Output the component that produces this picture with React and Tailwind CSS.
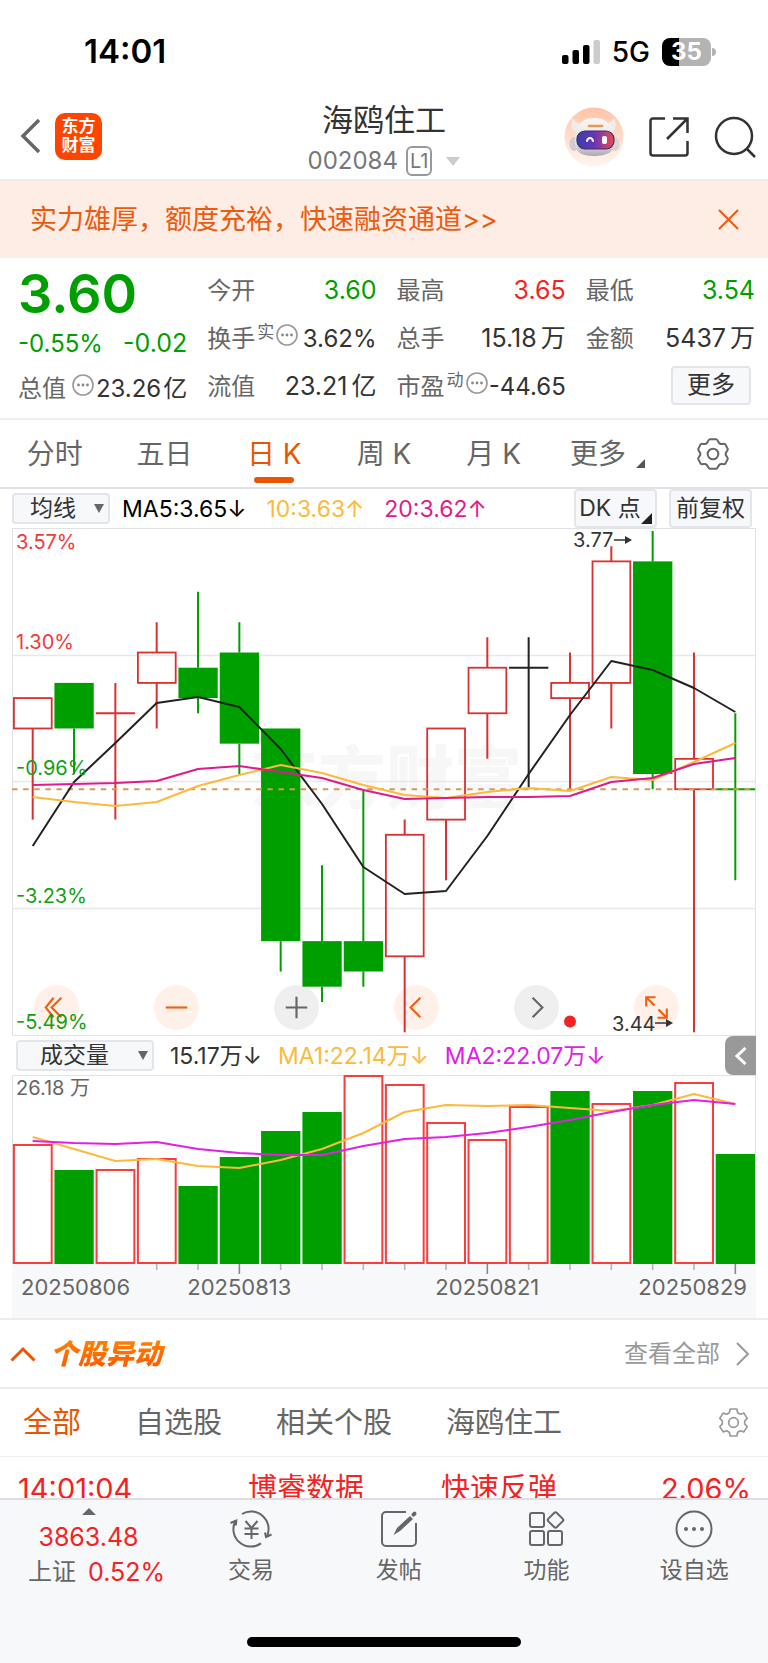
import { useState } from "react";

const GREEN = "#009f00";
const RED = "#d93030";

const quoteTabs = ["分时", "五日", "日 K", "周 K", "月 K"];
const filters = ["全部", "自选股", "相关个股", "海鸥住工"];

// o = open, c = close, h = high, l = low, v = volume bar height
const candles = [
  { o: 3.64, c: 3.66, h: 3.66, l: 3.58, v: 120 },
  { o: 3.67, c: 3.64, h: 3.67, l: 3.61, v: 94 },
  { o: 3.65, c: 3.65, h: 3.67, l: 3.58, v: 95, up: true },
  { o: 3.67, c: 3.69, h: 3.71, l: 3.64, v: 106 },
  { o: 3.68, c: 3.66, h: 3.73, l: 3.65, v: 78 },
  { o: 3.69, c: 3.63, h: 3.71, l: 3.61, v: 107 },
  { o: 3.64, c: 3.5, h: 3.64, l: 3.48, v: 133 },
  { o: 3.5, c: 3.47, h: 3.55, l: 3.46, v: 152 },
  { o: 3.5, c: 3.48, h: 3.6, l: 3.47, v: 189, volUp: true },
  { o: 3.49, c: 3.57, h: 3.58, l: 3.44, v: 180 },
  { o: 3.58, c: 3.64, h: 3.64, l: 3.54, v: 142 },
  { o: 3.65, c: 3.68, h: 3.7, l: 3.62, v: 125 },
  { o: 3.68, c: 3.68, h: 3.7, l: 3.6, v: 158, flat: true, volUp: true },
  { o: 3.66, c: 3.67, h: 3.69, l: 3.6, v: 173, volUp: false },
  { o: 3.67, c: 3.75, h: 3.76, l: 3.64, v: 161 },
  { o: 3.75, c: 3.61, h: 3.77, l: 3.6, v: 173 },
  { o: 3.6, c: 3.62, h: 3.69, l: 3.44, v: 182 },
  { o: 3.6, c: 3.6, h: 3.65, l: 3.54, v: 110 },
];

const ma5 = [318, 254, 215, 175, 169, 179, 221, 276, 339, 366, 363, 308, 246, 187, 133, 142, 160, 184];
const ma10 = [269, 274, 278, 274, 258, 247, 237, 245, 257, 267, 270, 264, 260, 263, 249, 252, 234, 215];
const ma20 = [257, 256, 255, 253, 241, 238, 244, 250, 262, 271, 270, 269, 269, 268, 254, 250, 236, 230];
const vol1 = [62, 74, 86, 84, 91, 93, 85, 74, 58, 37, 30, 31, 30, 33, 36, 30, 19, 29];
const vol2 = [66, 68, 69, 67, 74, 78, 80, 80, 71, 64, 62, 58, 52, 45, 37, 30, 25, 29];

const cx = (i) => 20.7 + i * 41.33;
const py = (price) => 3 + (3.77 - price) * 1519;
const line = (arr) => arr.map((y, i) => `${cx(i)},${y}`).join(" ");
const isUp = (d) => d.up || d.c > d.o;

const ArrowTip = ({ x, y }) => (
  <g>
    <path d={`M${x} ${y}h14`} stroke="#333" strokeWidth="1.5" />
    <path d={`M${x + 11} ${y - 4}l7 4-7 4z`} fill="#333" />
  </g>
);

const PriceChart = () => (
  <svg viewBox="0 0 744 508" className="block w-full h-auto" role="img" aria-label="日K线">
    <text x="374" y="275" textAnchor="middle" fill="#f7f7f7" className="text-[68px] font-black">东方财富</text>
    {[127, 253, 380].map((y) => (
      <path key={y} d={`M0 ${y + 0.5}H744`} stroke="#e6e8ee" strokeWidth="1.5" />
    ))}
    <rect x="0.5" y="0.5" width="743" height="507" fill="none" stroke="#e0e2e6" />

    {candles.map((d, i) => {
      const x = cx(i);
      const top = py(Math.max(d.o, d.c));
      const bottom = py(Math.min(d.o, d.c));
      const color = d.flat ? "#222" : isUp(d) ? RED : GREEN;
      return (
        <g key={i} stroke={color} strokeWidth="2">
          <path d={`M${x} ${py(d.h)}V${top}M${x} ${bottom}V${py(d.l)}`} />
          {d.o === d.c ? (
            <path d={`M${x - 19.6} ${top}h39.3`} />
          ) : isUp(d) ? (
            <rect x={x - 18.8} y={top} width="37.8" height={bottom - top} fill="none" strokeWidth="1.8" />
          ) : (
            <rect x={x - 19.6} y={top} width="39.3" height={bottom - top} fill={color} stroke="none" />
          )}
        </g>
      );
    })}

    <path d="M0 261.2H744" stroke="#d29a5b" strokeWidth="2" strokeDasharray="5.5 5.6" />
    <g fill="none" strokeWidth="2" strokeLinejoin="round">
      <polyline points={line(ma5)} stroke="#222" />
      <polyline points={line(ma10)} stroke="#fdb93a" />
      <polyline points={line(ma20)} stroke="#df1b8b" />
    </g>

    <g className="text-[20px]">
      <text x="4" y="21" fill="#f03a3a">3.57%</text>
      <text x="4" y="121" fill="#f03a3a">1.30%</text>
      <text x="4" y="247" fill="#12a012">-0.96%</text>
      <text x="4" y="375" fill="#12a012">-3.23%</text>
      <text x="4" y="501" fill="#12a012">-5.49%</text>
      <text x="561" y="19" fill="#333">3.77</text>
      <text x="600" y="503" fill="#333">3.44</text>
    </g>
    <ArrowTip x={602} y={12} />
    <ArrowTip x={643} y={495} />
    <circle cx="558" cy="493.5" r="6" fill="#f52222" />
  </svg>
);

const VolumeChart = () => (
  <svg viewBox="0 0 744 243" className="block w-full h-auto" role="img" aria-label="成交量">
    <rect x="0" y="189" width="744" height="54" fill="#f7f8fa" />
    <path d="M0.5 189V0.5H743.5V189" fill="none" stroke="#e0e2e6" />
    <text x="4" y="20" fill="#666" className="text-[20px]">26.18 万</text>
    {candles.map((d, i) => {
      const up = d.volUp ?? isUp(d);
      return up ? (
        <rect key={i} x={cx(i) - 18.8} y={190 - d.v} width="37.8" height={d.v - 2} fill="none" stroke="#f93c3c" strokeWidth="2" />
      ) : (
        <rect key={i} x={cx(i) - 19.6} y={189 - d.v} width="39.3" height={d.v} fill={GREEN} />
      );
    })}
    <g fill="none" strokeWidth="2" strokeLinejoin="round">
      <polyline points={line(vol1)} stroke="#fdb93a" />
      <polyline points={line(vol2)} stroke="#e020e6" />
    </g>
    {candles.map((d, i) =>
      i < 3 ? null : (
        <path key={i} d={`M${cx(i)} 189v${i % 6 === 5 ? 10 : 6}`} stroke={i % 6 === 5 ? "#888" : "#b5b5b5"} strokeWidth="1.6" />
      )
    )}
    <g fill="#666" className="text-[22px]">
      <text x="9" y="220">20250806</text>
      <text x={cx(5)} y="220" textAnchor="middle">20250813</text>
      <text x={cx(11)} y="220" textAnchor="middle">20250821</text>
      <text x="735" y="220" textAnchor="end">20250829</text>
    </g>
  </svg>
);

const MoreDots = () => (
  <svg width="22" height="22" viewBox="0 0 22 22" className="shrink-0">
    <circle cx="11" cy="11" r="10" fill="none" stroke="#999" strokeWidth="1.6" />
    <g fill="#888">
      <circle cx="6.5" cy="11" r="1.4" />
      <circle cx="11" cy="11" r="1.4" />
      <circle cx="15.5" cy="11" r="1.4" />
    </g>
  </svg>
);

const Robot = () => (
  <svg width="60" height="60" viewBox="0 0 60 60">
    <defs>
      <linearGradient id="halo" x1="0" y1="0" x2="0" y2="1">
        <stop offset="0" stopColor="#ffc4a6" />
        <stop offset="1" stopColor="#fff6f1" />
      </linearGradient>
      <linearGradient id="shell" x1="0" y1="0" x2="0" y2="1">
        <stop offset="0" stopColor="#fbf7f5" />
        <stop offset="0.7" stopColor="#e3dfe2" />
        <stop offset="1" stopColor="#aaa6ad" />
      </linearGradient>
      <linearGradient id="visor" x1="0" y1="0" x2="1" y2="0">
        <stop offset="0" stopColor="#3c3fa8" />
        <stop offset="0.45" stopColor="#6335bd" />
        <stop offset="1" stopColor="#ee4a4a" />
      </linearGradient>
    </defs>
    <circle cx="30" cy="30" r="29.5" fill="url(#halo)" />
    <path d="M9 11c-4 7-1 13 5 15l6-9c-5 0-9-2-11-6zM50 11c4 7 1 13-5 15l-6-9c5 0 9-2 11-6z" fill="#f1ecec" />
    <ellipse cx="10" cy="37" rx="4.5" ry="7" fill="#cfcbd1" />
    <ellipse cx="51" cy="37" rx="4.5" ry="7" fill="#d8d4d8" />
    <path d="M11 36C10 19 18 11 30 11s22 8 21 25c0 9-9 13-21 13s-19-4-19-13z" fill="url(#shell)" />
    <path d="M25 19h13" stroke="#e79a57" strokeWidth="2.6" strokeLinecap="round" />
    <rect x="13" y="24" width="37" height="18" rx="8" fill="url(#visor)" stroke="#39305f" strokeWidth="1.2" />
    <path d="M23 34c1-4 5-4 6 0" fill="none" stroke="#fff" strokeWidth="2" strokeLinecap="round" />
    <rect x="38" y="29" width="5" height="8" rx="2" fill="#fff" />
  </svg>
);

const Gear = ({ size, color }) => (
  <svg width={size} height={size} viewBox="0 0 30 30" fill="none" stroke={color} strokeWidth="1.9" strokeLinejoin="round">
    <path d="M12 1.2h6c1.5 0 1.800 3.400 3.600 4.200 1.700.8 4-.8 5 .6l2.200 4.200c.6 1.500-2 2.900-2 4.800s2.600 3.300 2 4.800l-2.200 4.200c-1 1.400-3.300-.2-5 .6-1.800.8-2.100 4.200-3.600 4.200h-6c-1.500 0-1.800-3.400-3.600-4.200-1.700-.8-4 .8-5-.6l-2.200-4.200c-.6-1.500 2-2.900 2-4.800s-2.600-3.300-2-4.800L3.400 6c1-1.400 3.300.2 5-.6 1.800-.8 2.100-4.200 3.600-4.200z" />
    <circle cx="15" cy="15" r="5" />
  </svg>
);

const Cog = () => (
  <svg width="29" height="29" viewBox="0 0 29 29" fill="none" stroke="#999" strokeWidth="1.7" strokeLinejoin="round">
    <path d="M11.2 1h6.6l.9 3.7 2.6 1.5 3.6-1.1 3.3 5.3-2.5 2.6v3l2.5 2.6-3.3 5.3-3.6-1.1-2.6 1.5-.9 3.7h-6.6l-.9-3.7-2.6-1.5-3.6 1.1L.8 18.6 3.3 16v-3L.8 10.4l3.3-5.3 3.6 1.1 2.6-1.5z" />
    <circle cx="14.5" cy="14.5" r="4.8" />
  </svg>
);

const navItems = [
  {
    label: "交易",
    icon: (
      <>
        <path d="M12 4A17.5 17.5 0 0 1 37 26.2M31 33.400A17.5 17.5 0 0 1 5.400 11" />
        <path d="M41.500 24.500l-5.500 2.500-1-4.500M.5 13l5.800-2.500-.5 5" />
        <path d="M15.500 11l6 7 6-7M14.500 18.500h14M14.500 24h14M21.500 18v11" />
      </>
    ),
  },
  {
    label: "发帖",
    icon: (
      <>
        <path d="M28 2H8a4 4 0 0 0-4 4v26a4 4 0 0 0 4 4h26a4 4 0 0 0 4-4V13" />
        <path d="M15.5 25l3.5-7L32 6l3 3-13 12z" fill="#666" stroke="none" />
        <path d="M35.5 4.7l1-1" strokeWidth="4" strokeLinecap="round" />
      </>
    ),
  },
  {
    label: "功能",
    icon: (
      <>
        <rect x="5" y="3" width="14" height="14" rx="2" />
        <rect x="5" y="21" width="14" height="14" rx="2" />
        <rect x="23" y="21" width="14" height="14" rx="2" />
        <rect x="24.5" y="4" width="12" height="12" rx="2" transform="rotate(45 30.5 10)" />
      </>
    ),
  },
  {
    label: "设自选",
    icon: (
      <>
        <circle cx="21" cy="19" r="17.5" />
        <g fill="#666" stroke="none">
          <circle cx="13" cy="19" r="2" />
          <circle cx="21" cy="19" r="2" />
          <circle cx="29" cy="19" r="2" />
        </g>
      </>
    ),
  },
];

const chartTools = [
  { label: "后退", warm: true, d: "M20 13 12 23l8 10M28 13 18 23l10 10" },
  { label: "缩小", warm: true, d: "M12 23h22" },
  { label: "放大", warm: false, d: "M12 23h22M23 12v22" },
  { label: "上一根", warm: true, d: "M27 13 17 23l10 10" },
  { label: "下一根", warm: false, d: "M19 13l10 10-10 10" },
  { label: "全屏", warm: true, d: "M12.5 22v-9.5H22M13 13l8 8M33.5 24v9.5H24M33 33l-8-8" },
];

const Field = ({ label, value, unit, tone = "text-[#333]", mark, dots }) => (
  <div className="flex items-center justify-between h-12 whitespace-nowrap">
    <dt className="flex items-center text-[24px] text-[#666]">
      {label}
      {mark && <span className="mb-3 ml-0.5 text-[17px]">{mark}</span>}
      {dots && <span className="mb-2 ml-0.5"><MoreDots /></span>}
    </dt>
    <dd className={`${dots ? "text-[24px]" : "text-[25px]"} ${tone}`}>
      {value}
      {unit && <span className="ml-1">{unit}</span>}
    </dd>
  </div>
);

const App = () => {
  const [tab, setTab] = useState("日 K");
  const [filter, setFilter] = useState("全部");
  const [banner, setBanner] = useState(true);

  return (
    <div lang="zh-CN" className="min-h-screen bg-white text-[#333] font-[Inter,'Noto_Sans_CJK_SC',sans-serif]">

      {/* Status bar */}
      <div className="flex items-center justify-between h-[90px] pl-[84px] pr-[52px] pt-3.5 text-black">
        <span className="text-[33px] font-semibold">14:01</span>
        <div className="flex items-center gap-3">
          <svg width="38" height="26" viewBox="0 0 38 26">
            <rect x="0" y="16" width="6.5" height="9" rx="2" />
            <rect x="10.5" y="11" width="6.5" height="14" rx="2" />
            <rect x="21" y="6" width="6.5" height="19" rx="2" />
            <rect x="31.5" y="1" width="6.5" height="24" rx="2" fill="#ccc" />
          </svg>
          <span className="text-[28px] font-medium">5G</span>
          <div className="flex items-center gap-px">
            <span className="flex items-center justify-center w-[49px] h-7 rounded-lg bg-linear-to-r from-black from-35% to-[#b3b3b3] to-35% text-white text-[24px] font-bold">35</span>
            <span className="w-1 h-2 rounded-r-full bg-[#b3b3b3]" />
          </div>
        </div>
      </div>

      {/* Header */}
      <header className="grid grid-cols-[1fr_auto_1fr] items-center h-[91px] border-b-2 border-[#ececee] px-3">
        <div className="flex items-center gap-3.5 pl-2">
          <button aria-label="返回">
            <svg width="21" height="36" viewBox="0 0 21 36" fill="none" stroke="#666" strokeWidth="3.5">
              <path d="M19 2 3 18l16 16" />
            </svg>
          </button>
          <a href="#home" className="flex items-center justify-center w-[47px] h-[47px] rounded-[10px] bg-[#ff4400] text-white text-[17px] leading-[19px] font-bold text-center">
            东方<br />财富
          </a>
        </div>
        <div className="flex flex-col items-center pt-2.5">
          <h1 className="text-[31px] leading-10">海鸥住工</h1>
          <button className="flex items-center gap-2 text-[24px] leading-[42px] text-[#777]">
            002084
            <span className="border-2 border-[#999] rounded-md px-0.5 text-[20px] leading-[26px]">L1</span>
            <svg width="14" height="9" viewBox="0 0 14 9" className="ml-1.5"><path d="M0 0h14L7 9z" fill="#ccc" /></svg>
          </button>
        </div>
        <div className="flex items-center justify-end gap-6 pt-0.5">
          <button aria-label="智能助手"><Robot /></button>
          <button aria-label="分享">
            <svg width="42" height="42" viewBox="0 0 42 42" fill="none" stroke="#333" strokeWidth="2.5">
              <path d="M17 2.5H5A2.5 2.5 0 0 0 2.5 5v32A2.5 2.5 0 0 0 5 39.5h32a2.5 2.5 0 0 0 2.5-2.5V25M25 2.5h14.5V17M39 3 19 23" />
            </svg>
          </button>
          <button aria-label="搜索">
            <svg width="42" height="42" viewBox="0 0 42 42" fill="none" stroke="#333" strokeWidth="2.5">
              <circle cx="20" cy="20" r="18" />
              <path d="M32.5 32.5 41 41" />
            </svg>
          </button>
        </div>
      </header>

      {/* Banner */}
      {banner && (
        <div className="flex items-center justify-between h-[77px] bg-[#feede5] pl-[30px] pr-[29px] text-[#ec5a0d]">
          <a href="#loan" className="pt-0.5 text-[27px]">实力雄厚，额度充裕，快速融资通道&gt;&gt;</a>
          <button aria-label="关闭" onClick={() => setBanner(false)}>
            <svg width="21" height="21" viewBox="0 0 21 21" stroke="currentColor" strokeWidth="2"><path d="M1 1l19 19M20 1 1 20" /></svg>
          </button>
        </div>
      )}

      {/* Quote */}
      <dl className="grid grid-cols-4 gap-x-5 pl-[18px] pr-[13px] pt-[9px] pb-[7px] border-b-2 border-[#efefef]">
        <div className="flex flex-col">
          <dd className="text-[54px] leading-[54px] font-semibold text-[#009f00]">3.60</dd>
          <dd className="flex items-center justify-between h-[46px] text-[25px] text-[#009f00]">
            <span className="text-[24px]">-0.55%</span>
            <span>-0.02</span>
          </dd>
          <div className="flex items-center justify-between h-11 whitespace-nowrap">
            <dt className="flex items-center text-[24px] text-[#666]">
              总值<span className="mb-2 ml-1.5"><MoreDots /></span>
            </dt>
            <dd className="text-[24px]">23.26<span className="ml-0.5">亿</span></dd>
          </div>
        </div>
        <div>
          <Field label="今开" value="3.60" tone="text-[#009f00]" />
          <Field label="换手" mark="实" dots value="3.62%" />
          <Field label="流值" value="23.21" unit="亿" />
        </div>
        <div>
          <Field label="最高" value="3.65" tone="text-[#f52222]" />
          <Field label="总手" value="15.18" unit="万" />
          <Field label="市盈" mark="动" dots value="-44.65" />
        </div>
        <div>
          <Field label="最低" value="3.54" tone="text-[#009f00]" />
          <Field label="金额" value="5437" unit="万" />
          <div className="flex items-center justify-end h-12 pr-1">
            <button className="w-20 h-[39px] mb-1 rounded border-2 border-[#e3e5ea] bg-[#f7f8fa] text-[24px] leading-none">更多</button>
          </div>
        </div>
      </dl>

      {/* Period tabs */}
      <nav className="grid grid-cols-7 h-[69px] border-b-2 border-[#e1e2e9] text-[28px] text-[#666]">
        {quoteTabs.map((t) => (
          <button
            key={t}
            onClick={() => setTab(t)}
            className={`relative flex items-center justify-center ${tab === t ? "text-[#ec5500]" : ""}`}
          >
            {t}
            {tab === t && <span className="absolute bottom-1 w-10 h-1.5 rounded-full bg-[#ec5500]" />}
          </button>
        ))}
        <button className="flex items-center justify-center gap-2.5 pl-2">
          更多
          <svg width="9" height="9" viewBox="0 0 9 9" className="mt-5"><path d="M9 0v9H0z" fill="#555" /></svg>
        </button>
        <button aria-label="设置" className="flex items-center justify-center"><Gear size={32} color="#666" /></button>
      </nav>

      {/* Chart */}
      <section className="px-3">
        <div className="flex items-center h-[39px] text-[23px] whitespace-nowrap">
          <label className="relative flex items-center">
            <select aria-label="指标" className="appearance-none w-[98px] h-[31px] pl-4 rounded border-2 border-[#e3e5ea] bg-[#f7f8fa] text-[23px] leading-none">
              <option>均线</option>
            </select>
            <svg width="10" height="9" viewBox="0 0 10 9" className="absolute right-1.5"><path d="M0 0h10L5 9z" fill="#666" /></svg>
          </label>
          <span className="ml-3 pt-0.5 text-black">MA5:3.65↓</span>
          <span className="ml-5 pt-0.5 text-[#fdb93a]">10:3.63↑</span>
          <span className="ml-5 pt-0.5 text-[#df1b8b]">20:3.62↑</span>
          <div className="flex ml-auto mr-1 gap-3">
            <button className="flex items-center justify-center w-[83px] h-[39px] rounded border-2 border-[#e3e5ea] bg-[#f7f8fa]">
              DK 点
              <svg width="11" height="11" viewBox="0 0 11 11" className="mt-5"><path d="M11 0v11H0z" fill="#222" /></svg>
            </button>
            <button className="w-[83px] h-[39px] rounded border-2 border-[#e3e5ea] bg-[#f7f8fa]">前复权</button>
          </div>
        </div>

        <div className="relative">
          <div className="absolute inset-x-0 bottom-1.5 flex justify-between pl-[22px] pr-[77px]">
            {chartTools.map((b) => (
              <button
                key={b.label}
                aria-label={b.label}
                className={`w-[45px] h-[45px] rounded-full ${b.warm ? "bg-[#fff1ea] text-[#f0600f]" : "bg-[#efefef] text-[#666]"}`}
              >
                <svg viewBox="0 0 46 46" fill="none" stroke="currentColor" strokeWidth="2.2"><path d={b.d} /></svg>
              </button>
            ))}
          </div>
          <div className="relative pointer-events-none"><PriceChart /></div>
        </div>

        <div className="flex items-center h-[39px] pl-1 text-[23px] whitespace-nowrap">
          <label className="relative flex items-center">
            <select aria-label="副图指标" className="appearance-none w-[138px] h-[31px] pl-[22px] rounded border-2 border-[#e3e5ea] bg-[#f7f8fa] text-[23px] leading-none">
              <option>成交量</option>
            </select>
            <svg width="10" height="9" viewBox="0 0 10 9" className="absolute right-1.5"><path d="M0 0h10L5 9z" fill="#666" /></svg>
          </label>
          <span className="ml-4 pt-0.5">15.17万↓</span>
          <span className="ml-4 pt-0.5 text-[#fdb93a]">MA1:22.14万↓</span>
          <span className="ml-4 pt-0.5 text-[#e020e6]">MA2:22.07万↓</span>
          <button aria-label="展开" className="flex items-center justify-center ml-auto w-[31px] h-[39px] rounded-l-lg bg-[#999]">
            <svg width="12" height="18" viewBox="0 0 12 18" fill="none" stroke="#fff" strokeWidth="3"><path d="M10.5 1 2 9l8.500 8" /></svg>
          </button>
        </div>
        <VolumeChart />
      </section>

      {/* Movers */}
      <section>
        <div className="flex items-center h-[71px] border-y-2 border-[#ececee] pl-2.5 pr-[18px]">
          <button aria-label="收起">
            <svg width="26" height="16" viewBox="0 0 26 16" fill="none" stroke="#ec5500" strokeWidth="3"><path d="M1.5 14.5 13 3l11.5 11.5" /></svg>
          </button>
          <h2 className="ml-3.5 pr-2 text-[28px] font-black italic bg-linear-to-b from-[#ff8a00] to-[#ff4a00] bg-clip-text text-transparent">个股异动</h2>
          <a href="#all" className="flex items-center gap-4 ml-auto text-[24px] text-[#999]">
            查看全部
            <svg width="14" height="24" viewBox="0 0 14 24" fill="none" stroke="#999" strokeWidth="2"><path d="M1 1l11 11L1 23" /></svg>
          </a>
        </div>
        <div className="flex items-center gap-[54px] h-[68px] border-b border-[#eee] pl-[23px] pr-5 text-[29px] text-[#666]">
          {filters.map((f) => (
            <button key={f} onClick={() => setFilter(f)} className={filter === f ? "text-[#ec5500]" : ""}>{f}</button>
          ))}
          <button aria-label="筛选设置" className="ml-auto"><Cog /></button>
        </div>
        <table className="w-full table-fixed text-[29px] text-[#f52222]">
          <tbody>
            <tr className="h-16">
              <td className="w-[248px] pl-[18px]">14:01:04</td>
              <td className="w-[193px]">博睿数据</td>
              <td>快速反弹</td>
              <td className="text-right pr-[17px]">2.06%</td>
            </tr>
          </tbody>
        </table>
      </section>

      {/* Bottom bar */}
      <footer className="fixed inset-x-0 bottom-0 flex flex-col items-center bg-[#f7f8fa] border-t-2 border-[#dcdee3] text-[#666]">
        <div className="grid grid-cols-[177px_1fr_1fr_1fr_1fr] w-full pt-2 pb-11">
          <button className="flex flex-col items-center text-[24px]">
            <svg width="14" height="7" viewBox="0 0 14 7"><path d="M7 0l7 7H0z" fill="#666" /></svg>
            <span className="mt-1 text-[25px] leading-9 text-[#f52222]">3863.48</span>
            <span className="flex gap-3 pl-4 leading-[34px]">上证 <span className="text-[25px] text-[#f52222]">0.52%</span></span>
          </button>
          {navItems.map((n) => (
            <button key={n.label} className="flex flex-col items-center gap-1.5 pt-0.5 text-[23px] leading-8">
              <svg width="42" height="38" viewBox="0 0 42 38" fill="none" stroke="#666" strokeWidth="2">{n.icon}</svg>
              {n.label}
            </button>
          ))}
        </div>
        <div className="w-[274px] h-2.5 mt-1 mb-4 rounded-full bg-black" />
      </footer>
    </div>
  );
};

export default App;
